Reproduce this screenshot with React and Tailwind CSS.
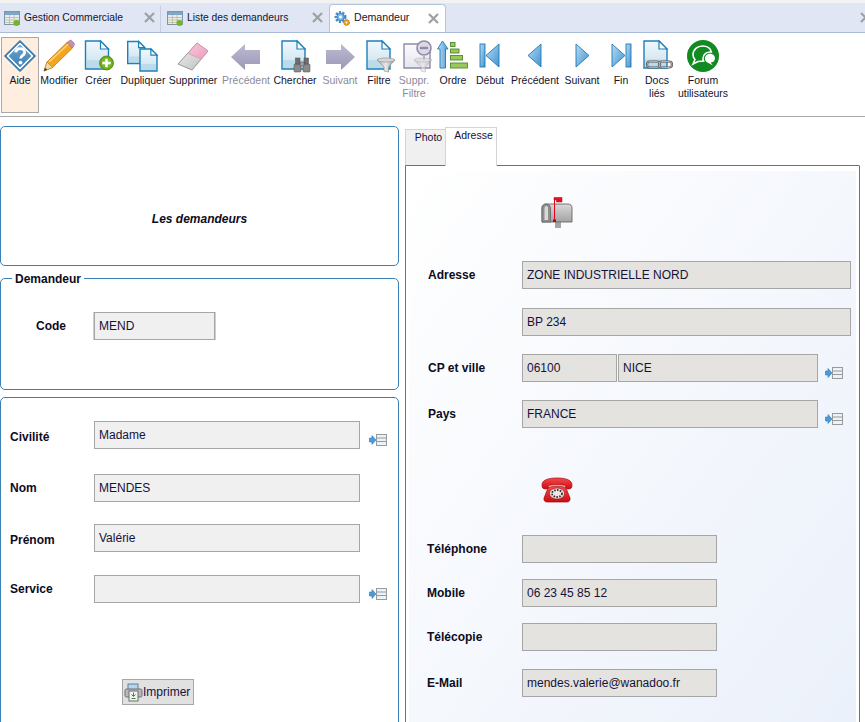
const Doc = ({ x = 2.5, y = 1, w = 23, h = 28, fade }) => {
  const f = Math.min(8, w * 0.36);
  const stroke = fade ? '#8f8aa8' : '#1c80ba';
  return (
    <g>
      <path d={`M${x} ${y}H${x + w - f}L${x + w} ${y + f}V${y + h}H${x}Z`} fill={fade ? 'url(#docFade)' : 'url(#docFill)'} stroke={stroke} strokeWidth="1.4" />
      {!fade && <rect x={x + 1} y={y + h * 0.68} width={w - 2} height={h * 0.32 - 1} fill="#b4d6e7" opacity="0.7" />}
      <path d={`M${x + w - f} ${y}V${y + f}H${x + w}Z`} fill="#fff" stroke={stroke} strokeWidth="1.2" />
    </g>
  );
};

const Funnel = ({ fade, dx = 0 }) => (
  <g opacity={fade ? 0.55 : 1} transform={`translate(${dx} 0)`}>
    <path d="M13 20H31L24.5 27V32L20 31V27Z" fill="url(#steel)" stroke="#8b8b8b" strokeWidth="0.6" />
    <ellipse cx="22" cy="20" rx="9" ry="2" fill="#d6d6d6" stroke="#8b8b8b" strokeWidth="0.6" />
  </g>
);

const Icon = ({ children }) => (
  <svg className="h-8 w-8 shrink-0 overflow-visible" viewBox="0 0 32 32" aria-hidden>
    {children}
  </svg>
);

const icons = {
  aide: (
    <g>
      <path d="M16 0.5L31.5 16L16 31.5L0.5 16Z" fill="#3b7db3" stroke="#2a6ea3" strokeWidth="1" strokeLinejoin="round" />
      <path d="M16 3.5L28.5 16L16 28.5L3.5 16Z" fill="url(#blueDiamond)" stroke="#fff" strokeWidth="1.6" strokeLinejoin="round" />
      <path d="M11.8 12.4C12 9.8 14 8.6 16.2 8.6C18.8 8.6 20.6 10.2 20.6 12.4C20.6 15.4 16.6 15.4 16.6 18.6" fill="none" stroke="#fff" strokeWidth="2.8" />
      <circle cx="16.5" cy="22.6" r="1.9" fill="#fff" />
    </g>
  ),
  modifier: (
    <g>
      <path d="M1 31L4 22L24 2.5L29.5 8L9.5 27.5Z" fill="#f4a51f" stroke="#b9770f" strokeWidth="0.8" />
      <path d="M6 22L26 3.5" stroke="#fcd27a" strokeWidth="1.6" />
      <path d="M24 2.5L26.5 0.5C27.5 0 28 0 29 0.8L30.8 2.8C31.6 3.8 31.6 4.6 31 5.4L29.5 8Z" fill="#c58fb6" stroke="#8b6a8a" strokeWidth="0.6" />
      <path d="M1 31L4 22L9.5 27.5Z" fill="#f0d6a0" stroke="#b9770f" strokeWidth="0.5" />
      <path d="M1 31L2 27.8L4.2 29.8Z" fill="#333" />
    </g>
  ),
  creer: (
    <g>
      <Doc />
      <circle cx="23.5" cy="23" r="7" fill="url(#greenBall)" stroke="#4f8a12" strokeWidth="0.8" />
      <path d="M23.5 18.8V27.2M19.3 23H27.7" stroke="#fff" strokeWidth="2.4" />
    </g>
  ),
  dupliquer: (
    <g>
      <Doc x={0.7} y={1.5} w={17} h={22} />
      <Doc x={13} y={9} w={17} h={22} />
    </g>
  ),
  supprimer: (
    <g>
      <path d="M20 3L31 11L15 30L1 24Z" fill="url(#eraserGrey)" stroke="#8d8d8d" strokeWidth="0.9" strokeLinejoin="round" />
      <path d="M20 3L31 11L24.5 19L11 13.5Z" fill="url(#eraserPink)" stroke="#c898ae" strokeWidth="0.7" strokeLinejoin="round" />
    </g>
  ),
  prev: <path d="M1 17L15 4V10H30V24H15V30Z" fill="url(#greyArrow)" />,
  next: <path d="M31 17L17 4V10H2V24H17V30Z" fill="url(#greyArrow)" />,
  chercher: (
    <g>
      <Doc x={3} y={1} />
      <g stroke="#4d4d4d" strokeWidth="0.5">
        <rect x="15" y="24" width="7" height="8" rx="1" fill="#8a8a8a" />
        <rect x="24" y="24" width="7" height="8" rx="1" fill="#8a8a8a" />
        <rect x="16.5" y="18" width="4.5" height="6" fill="#6f6f6f" />
        <rect x="25" y="18" width="4.5" height="6" fill="#6f6f6f" />
        <rect x="21" y="22" width="4" height="4" fill="#a0a0a0" />
      </g>
    </g>
  ),
  filtre: (
    <g>
      <Doc x={4} y={1} />
      <Funnel dx={1} />
    </g>
  ),
  supprFiltre: (
    <g>
      <Doc x={6} y={4} w={26} h={24} fade />
      <circle cx="26" cy="8" r="7" fill="#ddd9e4" stroke="#8f8aa8" strokeWidth="1.6" />
      <rect x="22" y="6.8" width="8" height="2.4" fill="#8f8aa8" />
      <rect x="25" y="15" width="2" height="5" fill="#b5b2c6" />
      <Funnel fade dx={3} />
    </g>
  ),
  ordre: (
    <g>
      <path d="M5.5 1L11 9H8.5V28H3V9H0.5Z" fill="url(#blueV)" stroke="#2279b3" strokeWidth="0.9" strokeLinejoin="round" />
      <g fill="#9cc75c" stroke="#4f8a2e" strokeWidth="0.9">
        <rect x="13.5" y="2.5" width="4.5" height="4" />
        <rect x="13.5" y="9" width="8.5" height="4" />
        <rect x="13.5" y="15.5" width="12" height="4.5" />
        <rect x="13.5" y="23" width="17" height="5" />
      </g>
    </g>
  ),
  debut: (
    <g>
      <rect x="6" y="4" width="5" height="23" fill="url(#blueH)" stroke="#2279b3" strokeWidth="0.9" />
      <path d="M25 4V27L12 15.5Z" fill="url(#blueH)" stroke="#2279b3" strokeWidth="0.9" strokeLinejoin="round" />
    </g>
  ),
  precedent: <path d="M22 4V27L9 15.5Z" fill="url(#blueH)" stroke="#2279b3" strokeWidth="0.9" strokeLinejoin="round" />,
  suivant: <path d="M10 4V27L23 15.5Z" fill="url(#blueH)" stroke="#2279b3" strokeWidth="0.9" strokeLinejoin="round" />,
  fin: (
    <g>
      <path d="M7 4V27L20 15.5Z" fill="url(#blueH)" stroke="#2279b3" strokeWidth="0.9" strokeLinejoin="round" />
      <rect x="21" y="4" width="5" height="23" fill="url(#blueH)" stroke="#2279b3" strokeWidth="0.9" />
    </g>
  ),
  docs: (
    <g>
      <Doc x={3} y={1} w={23} h={27} />
      <g fill="none">
        <rect x="6" y="21.5" width="13" height="6" rx="3" stroke="#555" strokeWidth="2.2" />
        <rect x="18" y="21.5" width="13" height="6" rx="3" stroke="#555" strokeWidth="2.2" />
        <rect x="6" y="21.5" width="13" height="6" rx="3" stroke="#c8c8c8" strokeWidth="0.8" />
        <rect x="18" y="21.5" width="13" height="6" rx="3" stroke="#c8c8c8" strokeWidth="0.8" />
      </g>
    </g>
  ),
  forum: (
    <g>
      <circle cx="16" cy="16" r="16" fill="#118a22" />
      <path d="M6 15C6 9.5 10.5 6 15.5 6C20 6 23.5 8.3 24.3 12C20 11.5 16 14 16 18.5C16 19.5 16.1 20.3 16.5 21L11 21.5L6 24L8 19.5C6.7 18 6 16.8 6 15Z" fill="#118a22" stroke="#fff" strokeWidth="1.6" />
      <path d="M18 18.5C18 15.7 20.4 13.8 23 13.8C25.8 13.8 28 15.7 28 18.3C28 21 25.8 22.6 23.6 22.6L26 25.5L20.5 22.6C19 22 18 20.5 18 18.5Z" fill="#fff" />
    </g>
  ),
};

const tools = [
  { key: 'aide', label: ['Aide'], w: 'w-[38px]', on: true },
  { key: 'modifier', label: ['Modifier'], w: 'w-[40px]' },
  { key: 'creer', label: ['Créer'], w: 'w-[39px]' },
  { key: 'dupliquer', label: ['Dupliquer'], w: 'w-[50px]' },
  { key: 'supprimer', label: ['Supprimer'], w: 'w-[50px]' },
  { key: 'prev', label: ['Précédent'], w: 'w-[56px]', off: true },
  { key: 'chercher', label: ['Chercher'], w: 'w-[42px]' },
  { key: 'next', label: ['Suivant'], w: 'w-[48px]', off: true },
  { key: 'filtre', label: ['Filtre'], w: 'w-[30px]' },
  { key: 'supprFiltre', label: ['Suppr.', 'Filtre'], w: 'w-[40px]', off: true },
  { key: 'ordre', label: ['Ordre'], w: 'w-[38px]' },
  { key: 'debut', label: ['Début'], w: 'w-[36px]' },
  { key: 'precedent', label: ['Précédent'], w: 'w-[54px]' },
  { key: 'suivant', label: ['Suivant'], w: 'w-[40px]' },
  { key: 'fin', label: ['Fin'], w: 'w-[38px]' },
  { key: 'docs', label: ['Docs', 'liés'], w: 'w-[34px]' },
  { key: 'forum', label: ['Forum', 'utilisateurs'], w: 'w-[58px]' },
];

function ToolButton({ tool }) {
  const tone = tool.off ? 'text-[#8b8b98]' : 'text-[#14142c]';
  const box = tool.on ? 'border border-[#a8a8a8] bg-[#fdeedf]' : 'border border-transparent';
  return (
    <div className={`flex h-[76px] shrink-0 flex-col items-center pt-[2px] ${tool.w} ${box}`}>
      <Icon>{icons[tool.key]}</Icon>
      <div className={`mt-[2px] whitespace-nowrap text-center text-[10.5px] leading-[13px] ${tone}`}>
        {tool.label.map((l) => (
          <div key={l}>{l}</div>
        ))}
      </div>
    </div>
  );
}

const GridIcon = () => (
  <svg className="h-4 w-4 shrink-0" viewBox="0 0 16 16" aria-hidden>
    <rect x="0.5" y="1.5" width="15" height="13" fill="#e7eef2" stroke="#7e97a8" />
    <rect x="1" y="2" width="14" height="3" fill="#7fa6c4" />
    <path d="M1 7.5H15M1 10H15M1 12.5H15M5.5 5V14M10 5V14" stroke="#c2b98f" strokeWidth="0.8" />
    <circle cx="12.5" cy="13" r="3" fill="#74b32c" />
  </svg>
);

const GearIcon = () => (
  <svg className="h-4 w-4 shrink-0 overflow-visible" viewBox="0 0 16 16" aria-hidden>
    <circle cx="6.5" cy="7" r="4.5" fill="none" stroke="#3f8fd0" strokeWidth="3" strokeDasharray="2 1.2" />
    <circle cx="6.5" cy="7" r="3.7" fill="#7db8e8" stroke="#2f75b5" strokeWidth="0.8" />
    <circle cx="6.5" cy="7" r="1.4" fill="#fff" />
    <circle cx="12.5" cy="12.5" r="2.8" fill="#f0a62b" stroke="#c67c10" strokeWidth="1.2" strokeDasharray="1.4 0.7" />
    <circle cx="12.5" cy="12.5" r="0.9" fill="#fff" />
  </svg>
);

const CloseX = () => (
  <svg className="h-[11px] w-[11px] shrink-0" viewBox="0 0 11 11" aria-hidden>
    <path d="M1 1L10 10M10 1L1 10" stroke="#a0a0a0" strokeWidth="2.2" />
  </svg>
);

const ListLink = () => (
  <svg className="h-[14px] w-[18px] shrink-0" viewBox="0 0 18 14" aria-hidden>
    <path d="M0.5 5H3V2.5L7 7L3 11.5V9H0.5Z" fill="#4d9ad8" stroke="#2d78b8" strokeWidth="0.6" />
    <rect x="7.5" y="1.5" width="10" height="11" fill="#eaf3f8" stroke="#9a9a9a" />
    <path d="M8 5H17M8 8.5H17" stroke="#9a9a9a" />
  </svg>
);

function Field({ value, w, light }) {
  const tone = light ? 'bg-[#f0f0f0]' : 'bg-[#e4e3df]';
  return (
    <div className={`flex h-[28px] shrink-0 items-center border border-[#a6a6a6] px-[4px] text-[12px] text-[#15123a] ${tone} ${w}`}>
      {value}
    </div>
  );
}

function LeftRow({ label, value, mt, link, low }) {
  return (
    <div className={`flex items-center ${mt}`}>
      <div className={`w-[84px] shrink-0 text-[12px] font-bold text-[#0c0c1c] ${low ? 'pt-[4px]' : ''}`}>{label}</div>
      <Field value={value} w="w-[266px]" light />
      {link && (
        <div className="ml-[9px] mt-[10px]">
          <ListLink />
        </div>
      )}
    </div>
  );
}

function RightRow({ label, mt, indent, children }) {
  return (
    <div className={`flex items-center ${mt}`}>
      <div className={`w-[95px] shrink-0 text-[12px] font-bold text-[#0c0c1c] ${indent ? 'pl-px' : ''}`}>{label}</div>
      {children}
    </div>
  );
}

const panel = 'rounded-[5px] border border-[#3b80b4]';

export default function App() {
  return (
    <div className="h-[722px] w-[865px] overflow-hidden bg-white font-['Liberation_Sans',Arial,sans-serif]">
      <svg className="block h-0 w-0" aria-hidden>
        <defs>
          <linearGradient id="docFill" x1="0" y1="0" x2="0" y2="1">
            <stop offset="0" stopColor="#f1f8fc" />
            <stop offset="1" stopColor="#c9e1ee" />
          </linearGradient>
          <linearGradient id="docFade" x1="0" y1="0" x2="0" y2="1">
            <stop offset="0" stopColor="#fbfbfd" />
            <stop offset="1" stopColor="#e6e5ef" />
          </linearGradient>
          <linearGradient id="steel" x1="0" y1="0" x2="1" y2="0">
            <stop offset="0" stopColor="#a9a9a9" />
            <stop offset="0.5" stopColor="#e9e9e9" />
            <stop offset="1" stopColor="#8e8e8e" />
          </linearGradient>
          <linearGradient id="blueDiamond" x1="0" y1="0" x2="0" y2="1">
            <stop offset="0" stopColor="#6ba3cf" />
            <stop offset="1" stopColor="#3e7fb5" />
          </linearGradient>
          <radialGradient id="greenBall">
            <stop offset="0" stopColor="#a6d64a" />
            <stop offset="1" stopColor="#5fa214" />
          </radialGradient>
          <linearGradient id="eraserGrey" x1="0" y1="0" x2="1" y2="1">
            <stop offset="0" stopColor="#f2f2f2" />
            <stop offset="1" stopColor="#bdbdbd" />
          </linearGradient>
          <linearGradient id="eraserPink" x1="0" y1="0" x2="1" y2="1">
            <stop offset="0" stopColor="#f8c9da" />
            <stop offset="1" stopColor="#ee9dbd" />
          </linearGradient>
          <linearGradient id="greyArrow" x1="0" y1="0" x2="0" y2="1">
            <stop offset="0" stopColor="#bcbad3" />
            <stop offset="1" stopColor="#9a98b6" />
          </linearGradient>
          <linearGradient id="blueH" x1="0" y1="0" x2="1" y2="1">
            <stop offset="0" stopColor="#b6dcf4" />
            <stop offset="1" stopColor="#3f93d2" />
          </linearGradient>
          <linearGradient id="blueV" x1="0" y1="0" x2="1" y2="0">
            <stop offset="0" stopColor="#bfe0f5" />
            <stop offset="1" stopColor="#4b9cd8" />
          </linearGradient>
          <linearGradient id="mailbox" x1="0" y1="0" x2="0" y2="1">
            <stop offset="0" stopColor="#d9d9d9" />
            <stop offset="1" stopColor="#a3a3a3" />
          </linearGradient>
          <linearGradient id="redPhone" x1="0" y1="0" x2="0" y2="1">
            <stop offset="0" stopColor="#f54a4a" />
            <stop offset="1" stopColor="#cf0b12" />
          </linearGradient>
        </defs>
      </svg>

      {/* onglets */}
      <div className="h-[3px] bg-[#f2f2f2]" />
      <div className="flex h-[30px] items-end overflow-hidden border-b border-[#a9bddb] bg-[#e0e6f3] text-[10.3px] text-[#14142c]">
        <div className="flex h-[29px] w-[160px] shrink-0 items-center pl-[4px] pr-[5px]">
          <GridIcon />
          <span className="ml-[4px] flex-1">Gestion Commerciale</span>
          <CloseX />
        </div>
        <div className="h-[26px] w-px shrink-0 self-end bg-[#c3cee2]" />
        <div className="flex h-[29px] w-[168px] shrink-0 items-center pl-[6px] pr-[6px]">
          <GridIcon />
          <span className="ml-[4px] flex-1">Liste des demandeurs</span>
          <CloseX />
        </div>
        <div className="-mb-px flex h-[29px] w-[117px] shrink-0 items-center rounded-t-[4px] border border-b-0 border-[#b4c5df] bg-white pb-[2px] pl-[4px] pr-[6px] text-[10.6px]">
          <GearIcon />
          <span className="ml-[4px] flex-1">Demandeur</span>
          <CloseX />
        </div>
        <div className="ml-auto mr-[-6px] flex h-[29px] shrink-0 items-center">
          <CloseX />
        </div>
      </div>

      {/* barre d'outils */}
      <div className="flex h-[84px] items-start border-b border-[#a8a8a8] pl-px pt-[4px]">
        {tools.map((t, i) => (
          <ToolButton key={i} tool={t} />
        ))}
      </div>

      <div className="flex items-start">
        {/* colonne gauche */}
        <div className="w-[399px] shrink-0 pt-[9px]">
          <div className={`flex h-[140px] justify-center pt-[83px] text-[12px] font-bold italic text-[#0c0c1c] ${panel}`}>
            Les demandeurs
          </div>
          <fieldset className={`mt-[4px] h-[120px] ${panel}`}>
            <legend className="ml-[11px] h-[16px] px-[3px] pt-[2px] text-[12px] font-bold leading-[14px] text-[#0c0c1c]">Demandeur</legend>
            <div className="mt-[26px] flex items-center pl-[35px]">
              <div className="w-[58px] shrink-0 text-[12px] font-bold text-[#0c0c1c]">Code</div>
              <div className="shadow-[1px_0_0_#b9d5e8,-1px_0_0_#b9d5e8]">
                <Field value="MEND" w="w-[121px]" light />
              </div>
            </div>
          </fieldset>
          <div className={`mt-[7px] h-[340px] pl-[9px] ${panel}`}>
            <LeftRow label="Civilité" value="Madame" mt="mt-[23px]" link low />
            <LeftRow label="Nom" value="MENDES" mt="mt-[25px]" />
            <LeftRow label="Prénom" value="Valérie" mt="mt-[22px]" low />
            <LeftRow label="Service" value="" mt="mt-[23px]" link />
            <div className="ml-[112px] mt-[76px] flex h-[26px] w-[72px] items-center border border-[#a6a6a6] bg-[#e1e1e1] pl-[1px] text-[12px] text-[#15123a]">
              <svg className="h-[19px] w-[19px] shrink-0" viewBox="0 0 19 19" aria-hidden>
                <rect x="4" y="1" width="10" height="6" fill="#b9d4e8" stroke="#5f7f9a" />
                <rect x="1" y="6" width="17" height="8" rx="1.5" fill="#b8b8b8" stroke="#6f6f6f" />
                <rect x="5" y="8" width="9" height="10" fill="#f2f2f2" stroke="#6f6f6f" />
                <path d="M9.5 9.5V13M7.5 11.5L9.5 13.5L11.5 11.5M7.5 15.5H11.5" stroke="#3f8a2a" fill="none" />
              </svg>
              <span>Imprimer</span>
            </div>
          </div>
        </div>

        {/* onglets droite */}
        <div className="ml-[6px] w-[455px] shrink-0 pt-[10px]">
          <div className="flex h-[38px] items-end text-[10.5px] leading-[14px] text-[#15123a]">
            <div className="flex h-[36px] w-[40px] justify-center border-l border-t border-[#d4d4d4] bg-[#f0f0f0] pl-[6px]">Photo</div>
            <div className="relative z-10 -mb-px flex h-[39px] w-[52px] justify-center border-x border-t border-[#d4d4d4] bg-white pl-[5px]">Adresse</div>
          </div>
          <div className="h-[600px] rounded-tr-[1px] border border-[#3b80b4] px-[3px] pt-[5px]">
            <div className="h-full bg-linear-to-br from-white to-[#eaf0fa] pl-[18px] pr-[5px]">
              <div className="pl-[114px] pt-[26px]">
                <svg className="h-[32px] w-[32px]" viewBox="0 0 32 32" aria-hidden>
                  <rect x="14" y="25" width="6" height="6" fill="#a5a5a5" />
                  <path d="M1 25V11C1 8.5 3 7 5 7H27C29.5 7 31 8.5 31 11V25Z" fill="url(#mailbox)" stroke="#666" strokeWidth="0.9" />
                  <path d="M1 25V11C1 8.5 3 7 5 7C7.5 7 9.5 8.5 9.5 11V25Z" fill="#8f8f8f" stroke="#666" strokeWidth="0.8" />
                  <path d="M3.5 23V11.5C3.5 10 4.5 9 5.5 9C6.5 9 7 10 7 11.5V23Z" fill="#d9d9d9" />
                  <path d="M13.5 24V1" stroke="#e2061a" strokeWidth="1" />
                  <path d="M13 0.5H21V5H15.5V3H13Z" fill="#e8101f" stroke="#b00010" strokeWidth="0.5" />
                  <rect x="12" y="22.5" width="3" height="2.5" fill="#c00012" />
                </svg>
              </div>
              <RightRow label="Adresse" mt="mt-[32px]" indent>
                <Field value="ZONE INDUSTRIELLE NORD" w="w-[329px]" />
              </RightRow>
              <RightRow label="" mt="mt-[19px]">
                <Field value="BP 234" w="w-[329px]" />
              </RightRow>
              <RightRow label="CP et ville" mt="mt-[18px]" indent>
                <Field value="06100" w="w-[95px]" />
                <div className="ml-px">
                  <Field value="NICE" w="w-[200px]" />
                </div>
                <div className="ml-[7px] mt-[10px]">
                  <ListLink />
                </div>
              </RightRow>
              <RightRow label="Pays" mt="mt-[18px]" indent>
                <Field value="FRANCE" w="w-[296px]" />
                <div className="ml-[7px] mt-[10px]">
                  <ListLink />
                </div>
              </RightRow>
              <div className="pl-[114px] pt-[49px]">
                <svg className="h-[26px] w-[32px]" viewBox="0 0 32 26" aria-hidden>
                  <path d="M1 8C1 3 7 1 16 1C25 1 31 3 31 8C31 11 30 12 27 12C25 12 24.5 10.5 24.5 8.5C21 7.5 11 7.5 7.5 8.5C7.5 10.5 7 12 5 12C2 12 1 11 1 8Z" fill="url(#redPhone)" stroke="#a50a10" strokeWidth="0.7" />
                  <path d="M7 11C9 8.5 23 8.5 25 11L29 21C29.5 23.5 28 25 26 25H6C4 25 2.5 23.5 3 21Z" fill="url(#redPhone)" stroke="#a50a10" strokeWidth="0.7" />
                  <ellipse cx="16" cy="16.5" rx="7.5" ry="5.5" fill="#f1e5e5" stroke="#8a1014" strokeWidth="0.6" />
                  <ellipse cx="16" cy="16.5" rx="5" ry="3.5" fill="none" stroke="#333" strokeWidth="1.8" strokeDasharray="1.6 1.2" />
                </svg>
              </div>
              <RightRow label="Téléphone" mt="mt-[32px]">
                <Field value="" w="w-[195px]" />
              </RightRow>
              <RightRow label="Mobile" mt="mt-[16px]">
                <Field value="06 23 45 85 12" w="w-[195px]" />
              </RightRow>
              <RightRow label="Télécopie" mt="mt-[16px]">
                <Field value="" w="w-[195px]" />
              </RightRow>
              <RightRow label="E-Mail" mt="mt-[18px]">
                <Field value="mendes.valerie@wanadoo.fr" w="w-[195px]" />
              </RightRow>
            </div>
          </div>
        </div>
      </div>
    </div>
  );
}
